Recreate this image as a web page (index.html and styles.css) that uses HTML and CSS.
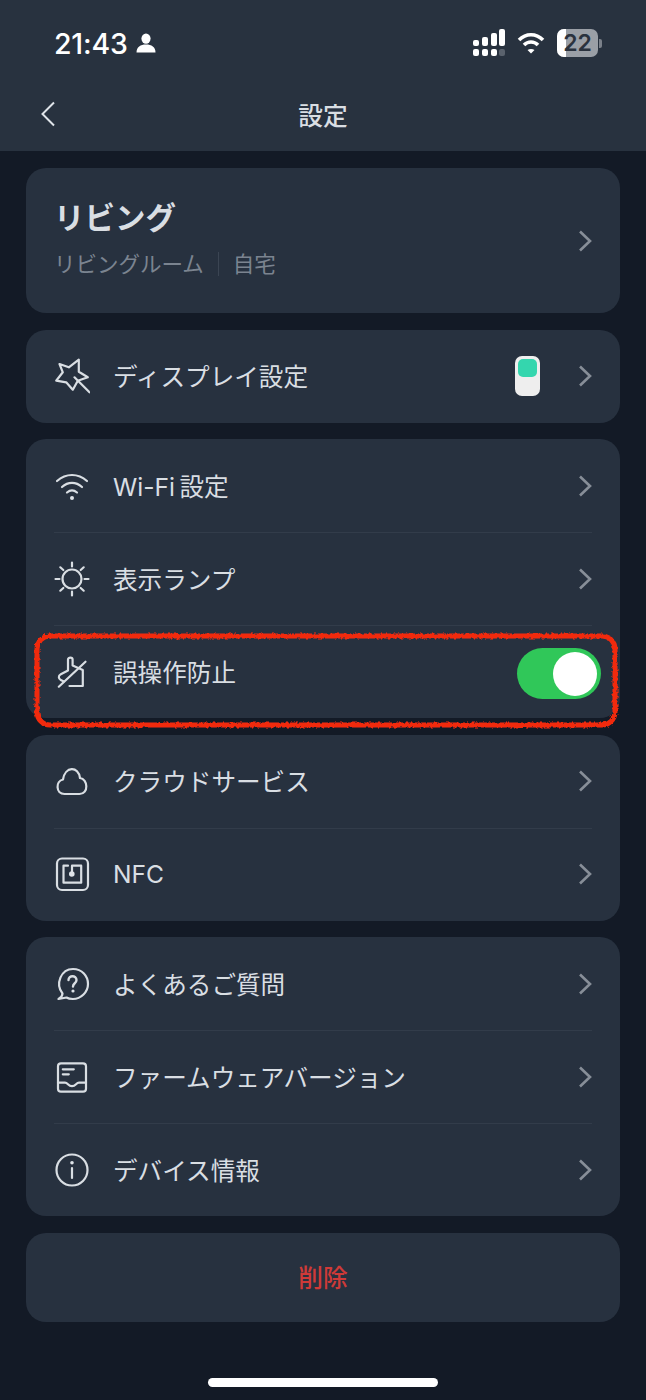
FILE: index.html
```html
<!DOCTYPE html>
<html lang="ja">
<head>
  <meta charset="UTF-8">
  <meta name="viewport" content="width=device-width, initial-scale=1.0">
  <title>設定</title>
  <link rel="stylesheet" href="styles.css">
</head>
<body>
  <header class="top">
    <div class="status">
      <div class="status-left">
        <span class="time">21:43</span>
        <svg class="person" width="20" height="20" viewBox="0 0 20 20" fill="#fff"><ellipse cx="10" cy="5.600" rx="4.600" ry="5.200"/><path d="M0.500 19.500c0-5.500 4-8 9.500-8s9.500 2.500 9.500 8z"/></svg>
      </div>
      <div class="status-right">
        <svg width="33" height="28" viewBox="0 0 33 28" fill="#fff">
          <rect x="1" y="11" width="6" height="6" rx="2"/><rect x="1" y="20" width="6" height="7" rx="2"/>
          <rect x="10" y="8" width="6" height="9" rx="2"/><rect x="10" y="20" width="6" height="7" rx="2"/>
          <rect x="19" y="4" width="6" height="13" rx="2"/><rect x="19" y="20" width="6" height="7" rx="2"/>
          <rect x="27" y="0" width="6" height="17" rx="2"/><rect x="27" y="20" width="6" height="7" rx="2" fill="#5a626d"/>
        </svg>
        <svg class="wifi-status" width="28" height="24" viewBox="0 0 28 24" fill="none" stroke="#fff" stroke-width="3.600"><path d="M2 9c7-7 17-7 24 0"/><path d="M7 14c4-4 10-4 14 0"/><path d="M10.500 19l3.500 3.500 3.500-3.500c-2-1.500-5-1.500-7 0z" fill="#fff" stroke="none"/></svg>
        <div class="battery">
          <div class="battery-body"><div class="battery-fill"></div><span class="battery-num">22</span></div>
          <div class="battery-cap"></div>
        </div>
      </div>
    </div>
    <div class="nav">
      <svg class="back" width="16" height="26" viewBox="0 0 16 26" fill="none" stroke="#dfe4e9" stroke-width="2"><path d="M14 1.500L2.500 13 14 24.500"/></svg>
      <h1 class="nav-title">設定</h1>
    </div>
  </header>

  <main class="list">
    <section class="card room">
      <div class="room-text">
        <div class="room-name">リビング</div>
        <div class="room-sub"><span>リビングルーム</span><span class="room-sep"></span><span>自宅</span></div>
      </div>
      <svg class="chev" width="14" height="22" viewBox="0 0 14 22"><path d="M2 1.500L12 11 2 20.500"/></svg>
    </section>

    <section class="card">
      <div class="row">
        <svg class="icon" width="36" height="36" viewBox="0 0 36 36"><path d="M5.500 6l9.300 3.300 10-7.600v12l9 5.600-10 3.400-5 9-6.600-7.400-10-1.600 6.600-8.400z"/><path d="M20.500 19.300l15 15"/></svg>
        <span class="label">ディスプレイ設定</span>
        <div class="device"><div class="device-screen"></div></div>
        <svg class="chev" width="14" height="22" viewBox="0 0 14 22"><path d="M2 1.500L12 11 2 20.500"/></svg>
      </div>
    </section>

    <section class="card">
      <div class="row">
        <svg class="icon" width="36" height="36" viewBox="0 0 36 36"><path d="M3 13c9-8 21-8 30 0"/><path d="M8 19c6-5.500 14-5.500 20 0"/><path d="M13 24.500c3-2.500 7-2.500 10 0"/><circle cx="18" cy="30" r="2" fill="#dfe4e9" stroke="none"/></svg>
        <span class="label">Wi-Fi&#8201;設定</span>
        <svg class="chev" width="14" height="22" viewBox="0 0 14 22"><path d="M2 1.500L12 11 2 20.500"/></svg>
      </div>
      <div class="row">
        <svg class="icon" width="36" height="36" viewBox="0 0 36 36"><circle cx="18" cy="18" r="9.500"/><path d="M18 1.500v4M18 30.500v4M1.500 18h4M30.500 18h4M6.300 6.300l3 2.700M29.700 6.300l-3 2.700M6.300 29.700l3-2.700M29.700 29.700l-3-2.700"/></svg>
        <span class="label">表示ランプ</span>
        <svg class="chev" width="14" height="22" viewBox="0 0 14 22"><path d="M2 1.500L12 11 2 20.500"/></svg>
      </div>
      <div class="row">
        <svg class="icon" width="36" height="36" viewBox="0 0 36 36"><path d="M14 16V5.500c0-2.500 4.600-2.500 4.600 0v6l10.200 4.500v16H15.500"/><path d="M14 16.500l-7.200 3.800c-2.800 1.400-2.400 4.500 0 5.700l3 1.500"/><path d="M31.500 7.700L4.800 32.700"/></svg>
        <span class="label">誤操作防止</span>
        <div class="switch"><div class="switch-knob"></div></div>
      </div>
    </section>

    <section class="card">
      <div class="row">
        <svg class="icon" width="36" height="36" viewBox="0 0 36 36"><path d="M10.500 31C1.500 31 1.500 18 9 16.500 11 3 24.500 3 26 15c8 1 9 16-.5 16z"/></svg>
        <span class="label">クラウドサービス</span>
        <svg class="chev" width="14" height="22" viewBox="0 0 14 22"><path d="M2 1.500L12 11 2 20.500"/></svg>
      </div>
      <div class="row">
        <svg class="icon" width="36" height="36" viewBox="0 0 36 36"><rect x="3" y="2.500" width="31" height="31.500" rx="5"/><path d="M14 9.700H9.500v17h17.700v-17H18v8"/><circle cx="17.800" cy="18" r="2.800" fill="#dfe4e9" stroke="none"/></svg>
        <span class="label label-latin">NFC</span>
        <svg class="chev" width="14" height="22" viewBox="0 0 14 22"><path d="M2 1.500L12 11 2 20.500"/></svg>
      </div>
    </section>

    <section class="card">
      <div class="row">
        <svg class="icon" width="36" height="36" viewBox="0 0 36 36"><path d="M8.500 27.500C1 18 7 3 19 3c9 0 15 7 15 15s-7 15-15 15c-3 0-5-.5-6.500-1.500L4.500 33c2.500-1.500 4-3.500 4-5.500z"/><path d="M14.500 14c0-5 8-5 8 0 0 3.500-3.500 3-3.500 6.500" stroke-width="2.400"/><circle cx="19" cy="25" r="1.600" fill="#dfe4e9" stroke="none"/></svg>
        <span class="label">よくあるご質問</span>
        <svg class="chev" width="14" height="22" viewBox="0 0 14 22"><path d="M2 1.500L12 11 2 20.500"/></svg>
      </div>
      <div class="row">
        <svg class="icon" width="36" height="36" viewBox="0 0 36 36"><rect x="4" y="4.300" width="28" height="28.400" rx="3"/><path d="M4 23.700h7c3 0 3 3.500 7 3.500s4-3.500 7-3.500h7"/><path d="M8.800 10.300h11M8.800 15.300h6"/></svg>
        <span class="label">ファームウェアバージョン</span>
        <svg class="chev" width="14" height="22" viewBox="0 0 14 22"><path d="M2 1.500L12 11 2 20.500"/></svg>
      </div>
      <div class="row">
        <svg class="icon" width="36" height="36" viewBox="0 0 36 36"><circle cx="18" cy="18" r="15.500"/><path d="M18 16v10"/><circle cx="18" cy="10.800" r="1.800" fill="#dfe4e9" stroke="none"/></svg>
        <span class="label">デバイス情報</span>
        <svg class="chev" width="14" height="22" viewBox="0 0 14 22"><path d="M2 1.500L12 11 2 20.500"/></svg>
      </div>
    </section>

    <section class="card delete"><span class="delete-text">削除</span></section>
  </main>

  <div class="home-bar"></div>

  <!-- hand drawn marker from the screenshot, sits on top of the list -->
  <svg class="marker" width="646" height="110" viewBox="0 0 646 110">
    <filter id="rough" x="-5%" y="-20%" width="110%" height="140%">
      <feTurbulence type="fractalNoise" baseFrequency="0.35" numOctaves="2" seed="4"/>
      <feDisplacementMap in="SourceGraphic" scale="4"/>
    </filter>
    <rect x="37" y="9" width="578" height="89" rx="13" filter="url(#rough)"/>
  </svg>
</body>
</html>
```

FILE: styles.css
```css
* {
  box-sizing: border-box;
}

body {
  margin: 0;
  width: 646px;
  height: 1400px;
  position: relative;
  overflow: hidden;
  background: #131a26;
  color: #d9dee3;
  font-family: Inter, "Noto Sans CJK JP", sans-serif;
}

.top {
  height: 151px;
  background: #28323f;
  padding: 26px 40px 0 40px;
}

.status {
  display: flex;
  justify-content: space-between;
  align-items: center;
  height: 34px;
  padding: 0 4px 0 14px;
}

.status-left {
  display: flex;
  align-items: center;
  gap: 8px;
}

.time {
  color: #fff;
  font-size: 28.500px;
  font-weight: 500;
  letter-spacing: -0.2px;
}

.status-right {
  display: flex;
  align-items: center;
}

.wifi-status {
  margin-left: 12px;
}

.battery {
  display: flex;
  align-items: center;
  margin-left: 12px;
}

.battery-body {
  width: 41px;
  height: 28px;
  border-radius: 7px;
  background: #9a9fa6;
  position: relative;
  overflow: hidden;
  display: flex;
  align-items: center;
  justify-content: center;
}

.battery-fill {
  position: absolute;
  left: 0;
  top: 0;
  bottom: 0;
  width: 9px;
  background: #fff;
}

.battery-num {
  position: relative;
  color: #2a323e;
  font-size: 23px;
  font-weight: 600;
  font-family: Inter, sans-serif;
}

.battery-cap {
  width: 3px;
  height: 9px;
  margin-left: 1px;
  background: #7b818a;
  border-radius: 0 2px 2px 0;
}

.nav {
  height: 91px;
  padding-top: 16px;
  display: grid;
  grid-template-columns: 16px 1fr 16px;
  align-items: center;
}

.nav-title {
  margin: 0;
  font-size: 24.700px;
  font-weight: 500;
  text-align: center;
}

.list {
  padding: 17px 26px 0 26px;
  display: flex;
  flex-direction: column;
  gap: 16.600px;
}

.card {
  background: #27313f;
  border-radius: 20px;
}

.room {
  height: 145px;
  display: flex;
  align-items: center;
  justify-content: space-between;
  padding: 0 28px;
}

.room-name {
  font-size: 30.500px;
  font-weight: 600;
  line-height: 40px;
  margin-top: -4px;
}

.room-sub {
  display: flex;
  align-items: center;
  margin-top: 11px;
  color: #7b8490;
  font-size: 21.500px;
  line-height: 30px;
}

.room-sep {
  width: 1px;
  height: 24px;
  margin: 0 14px;
  background: #3b4553;
}

.row {
  height: 93px;
  display: flex;
  align-items: center;
  padding: 0 28px;
  position: relative;
}

.row + .row::before {
  content: "";
  position: absolute;
  left: 28px;
  right: 28px;
  top: 0;
  height: 1px;
  background: #323c4a;
}

.icon {
  flex: none;
  fill: none;
  stroke: #d9dee3;
  stroke-width: 2.200;
  stroke-linecap: round;
  stroke-linejoin: round;
}

.label {
  margin-left: 23px;
  padding-bottom: 2px;
  flex: 1;
  font-size: 24.600px;
  white-space: nowrap;
}

.label-latin {
  padding-bottom: 0;
}

.chev {
  flex: none;
  fill: none;
  stroke: #878e98;
  stroke-width: 2.600;
}

.device {
  width: 25px;
  height: 40px;
  margin-right: 38px;
  padding: 3px 3px 0 3px;
  border-radius: 7px;
  background: #eeeeee;
}

.device-screen {
  height: 18px;
  border-radius: 5px;
  background: #34d6ae;
}

.switch {
  width: 84px;
  height: 51px;
  margin: 4px -9px 0 0;
  padding: 4px;
  border-radius: 26px;
  background: #30c759;
  display: flex;
  justify-content: flex-end;
}

.switch-knob {
  width: 44px;
  height: 44px;
  border-radius: 50%;
  background: #fff;
}

.delete {
  height: 89px;
  display: flex;
  align-items: center;
  justify-content: center;
  color: #cf3a38;
  font-size: 24.700px;
  font-weight: 500;
}

.delete-text {
  padding-bottom: 2px;
}

.home-bar {
  position: absolute;
  left: 208px;
  bottom: 13px;
  width: 230px;
  height: 9px;
  border-radius: 5px;
  background: #fff;
}

.marker {
  position: absolute;
  left: 0;
  top: 627px;
  fill: none;
  stroke: #f12a0e;
  stroke-width: 5;
}
```
